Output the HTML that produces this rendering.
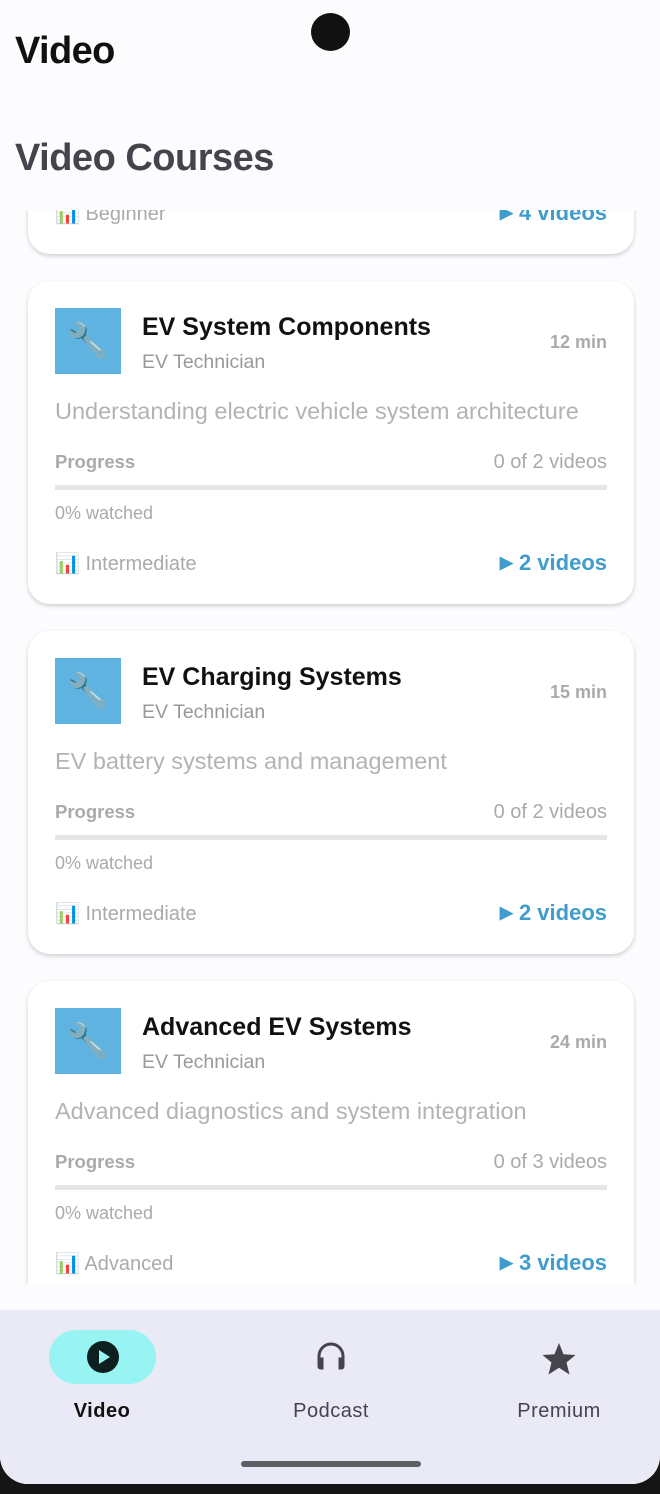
<!DOCTYPE html><html><head><style>
body{margin:0;width:660px;height:1494px;background:#151515;font-family:"Liberation Sans",sans-serif;overflow:hidden;position:relative}
.scr{position:absolute;left:0;top:0;width:660px;height:1484px;background:#fcfbfe;border-radius:0 0 28px 28px;overflow:hidden}
.h1{position:absolute;left:15px;top:30px;font-size:38px;font-weight:bold;color:#111;letter-spacing:-0.6px}
.h2{position:absolute;left:15px;top:137px;font-size:38px;font-weight:bold;color:#45444c;letter-spacing:-0.5px}
.cam{position:absolute;left:311px;top:13px;width:39px;height:38px;border-radius:50%;background:#111}
.list{position:absolute;left:0;top:210px;width:660px;height:1074px;overflow:hidden}
.card{position:absolute;left:28px;width:606px;height:323px;background:#fff;border-radius:22px;box-shadow:0 2px 4px rgba(0,0,0,.18)}
.ic{position:absolute;left:27px;top:27px;width:66px;height:66px;background:#5fb3e0;color:#9ac;font-size:34px;text-align:center;line-height:66px}
.t{position:absolute;left:114px;top:32px;font-size:25px;font-weight:bold;color:#111}
.s{position:absolute;left:114px;top:70px;font-size:19.5px;color:#999}
.d{position:absolute;right:27px;top:51px;font-size:18px;font-weight:bold;color:#aaa}
.ds{position:absolute;left:27px;top:117px;font-size:23.5px;color:#b3b3b3}
.pl{position:absolute;left:27px;top:170px;font-size:18.5px;font-weight:bold;color:#aaa}
.pr{position:absolute;right:27px;top:170px;font-size:20px;color:#aaa}
.bar{position:absolute;left:27px;right:27px;top:204px;height:5px;background:#e6e6e6}
.w{position:absolute;left:27px;top:222px;font-size:18px;color:#aaa}
.lv{position:absolute;left:27px;top:270px;font-size:20px;color:#aaa}
.v{position:absolute;right:27px;top:269px;font-size:22px;font-weight:bold;color:#3f9ccc}
.v span{font-size:17px;margin-right:6px;vertical-align:2px}
.nav{position:absolute;left:0;top:1310px;width:660px;height:174px;background:#e9eaf5}
.pill{position:absolute;left:49px;top:20px;width:107px;height:54px;border-radius:27px;background:#98f3f3}
.lab{position:absolute;top:90px;font-size:20px;color:#45444c;letter-spacing:.5px;transform:translateX(-50%)}
.home{position:absolute;left:241px;top:151px;width:180px;height:6px;border-radius:3px;background:#5f5f66}
</style></head><body><div class="scr">
<div class="cam"></div>
<div class="h1">Video</div>
<div class="h2">Video Courses</div>
<div class="list">
<div class="card" style="top:-279px"><div class="lv">📊 Beginner</div><div class="v"><span>▶</span>4 videos</div></div>
<div class="card" style="top:71px"><div class="ic">🔧</div><div class="t">EV System Components</div><div class="s">EV Technician</div><div class="d">12 min</div><div class="ds">Understanding electric vehicle system architecture</div><div class="pl">Progress</div><div class="pr">0 of 2 videos</div><div class="bar"></div><div class="w">0% watched</div><div class="lv">📊 Intermediate</div><div class="v"><span>▶</span>2 videos</div></div>
<div class="card" style="top:421px"><div class="ic">🔧</div><div class="t">EV Charging Systems</div><div class="s">EV Technician</div><div class="d">15 min</div><div class="ds">EV battery systems and management</div><div class="pl">Progress</div><div class="pr">0 of 2 videos</div><div class="bar"></div><div class="w">0% watched</div><div class="lv">📊 Intermediate</div><div class="v"><span>▶</span>2 videos</div></div>
<div class="card" style="top:771px"><div class="ic">🔧</div><div class="t">Advanced EV Systems</div><div class="s">EV Technician</div><div class="d">24 min</div><div class="ds">Advanced diagnostics and system integration</div><div class="pl">Progress</div><div class="pr">0 of 3 videos</div><div class="bar"></div><div class="w">0% watched</div><div class="lv">📊 Advanced</div><div class="v"><span>▶</span>3 videos</div></div>
</div>
<div class="nav">
<div class="pill"><svg style="position:absolute;left:37px;top:10px" width="34" height="34" viewBox="0 0 34 34"><circle cx="17" cy="17" r="16" fill="#0d1f1f"/><path d="M13 10v14l11-7z" fill="#98f3f3"/></svg></div>
<svg style="position:absolute;left:313px;top:28px" width="36" height="36" viewBox="0 0 24 24"><path d="M12 3a9 9 0 0 0-9 9v7a2 2 0 0 0 2 2h2v-8H5v-1a7 7 0 0 1 14 0v1h-2v8h2a2 2 0 0 0 2-2v-7a9 9 0 0 0-9-9z" fill="#45444c"/></svg>
<svg style="position:absolute;left:541px;top:30px" width="36" height="36" viewBox="0 0 24 24"><path d="M12 2l3 7.5 8 .5-6 5 2 8-7-4.5-7 4.5 2-8-6-5 8-.5z" fill="#45444c"/></svg>
<div class="lab" style="left:102px;font-weight:bold;color:#111">Video</div>
<div class="lab" style="left:331px">Podcast</div>
<div class="lab" style="left:559px">Premium</div>
<div class="home"></div>
</div>
</div></body></html>
